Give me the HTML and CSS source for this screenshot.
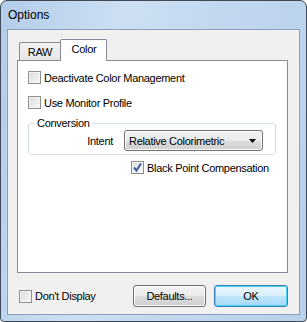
FILE: index.html
```html
<!DOCTYPE html>
<html lang="en">
<head>
    <meta charset="UTF-8">
    <title>Options</title>
    <link rel="stylesheet" href="styles.css">
</head>
<body>
    <div class="window">
        <div class="titlebar">Options</div>

        <div class="client">
            <div class="tabs">
                <div class="tab">RAW</div>
                <div class="tab selected">Color</div>
            </div>

            <div class="panel">
                <label class="check">
                    <span class="box"></span>
                    Deactivate Color Management
                </label>
                <label class="check">
                    <span class="box"></span>
                    Use Monitor Profile
                </label>

                <fieldset class="group">
                    <legend>Conversion</legend>
                    <div class="field-row">
                        <span class="field-label">Intent</span>
                        <div class="combo">
                            <span>Relative Colorimetric</span>
                            <svg width="7" height="4" viewBox="0 0 7 4"><polygon points="0,0 7,0 3.5,4" fill="#000"/></svg>
                        </div>
                    </div>
                </fieldset>

                <label class="check bpc">
                    <span class="box checked">
                        <svg width="11" height="11" viewBox="0 0 11 11"><path d="M2 5.5 L4.5 8.5 L9 1.5" fill="none" stroke="#3d5fa8" stroke-width="2"/></svg>
                    </span>
                    Black Point Compensation
                </label>
            </div>

            <div class="footer">
                <label class="check">
                    <span class="box"></span>
                    Don't Display
                </label>
                <div class="buttons">
                    <button class="btn">Defaults...</button>
                    <button class="btn default">OK</button>
                </div>
            </div>
        </div>
    </div>
</body>
</html>
```

FILE: styles.css
```css
body {
    margin: 0;
    padding: 0;
    font-family: "Liberation Sans", Arial, sans-serif;
    font-size: 11px;
    letter-spacing: -0.3px;
    color: #000;
    background: #fff;
}
.window {
    width: 307px;
    height: 322px;
    box-sizing: border-box;
    border: 1px solid #3c4a5a;
    border-radius: 7px 7px 4px 4px;
    background: linear-gradient(100deg, #b3cce8 0%, #cde0f3 35%, #c3d8ef 60%, #b8d0eb 100%);
    display: flex;
    flex-direction: column;
}
.titlebar {
    height: 28px;
    line-height: 29px;
    padding-left: 7px;
    font-size: 12px;
    letter-spacing: 0;
    color: #000;
}
.client {
    margin: 0 6px 6px 6px;
    flex: 1;
    border: 1px solid #8ba0b8;
    background: #f0f0f0;
    padding: 9px 11px 7px 9px;
    display: flex;
    flex-direction: column;
}
.tabs {
    display: flex;
    align-items: flex-end;
    height: 21px;
    padding-left: 2px;
}
.tab {
    box-sizing: border-box;
    width: 41px;
    height: 18px;
    border: 1px solid #898c95;
    border-bottom: none;
    border-right: none;
    border-radius: 2px 0 0 0;
    background: linear-gradient(#f3f3f3, #e5e5e5);
    text-align: center;
    line-height: 19px;
}
.tab.selected {
    width: 47px;
    height: 22px;
    margin-bottom: -1px;
    border-right: 1px solid #898c95;
    border-radius: 2px 2px 0 0;
    background: #fff;
    position: relative;
    z-index: 1;
    line-height: 18px;
    padding-left: 1px;
}
.panel {
    height: 213px;
    box-sizing: border-box;
    border: 1px solid #898c95;
    background: #fff;
    padding: 10px 11px 0 10px;
}
.check {
    display: flex;
    align-items: center;
    gap: 3px;
    height: 13px;
    margin-bottom: 12px;
    white-space: nowrap;
}
.box {
    box-sizing: border-box;
    width: 13px;
    height: 13px;
    flex: none;
    border: 1px solid #8e8f8f;
    background: linear-gradient(135deg, #d9d9d9, #fbfbfb);
    box-shadow: inset 0 0 0 1px #f4f4f4;
    display: flex;
    align-items: center;
    justify-content: center;
}
.box.checked {
    background: linear-gradient(135deg, #dcdcdc, #fbfbfb);
}
.group {
    margin: -4px 0 0 0;
    padding: 0 0 3px 0;
    border: 1px solid #d5dfe5;
    border-radius: 3px;
}
.group legend {
    margin-left: 6px;
    padding: 0 2px;
    line-height: 13px;
}
.field-row {
    display: flex;
    align-items: center;
    gap: 11px;
}
.field-label {
    width: 84px;
    text-align: right;
}
.combo {
    box-sizing: border-box;
    width: 139px;
    height: 21px;
    border: 1px solid #707070;
    border-radius: 3px;
    background: linear-gradient(#f2f2f2 0%, #ebebeb 50%, #dddddd 51%, #cfcfcf 100%);
    box-shadow: inset 0 0 0 1px #fcfcfc;
    display: flex;
    align-items: center;
    justify-content: space-between;
    padding: 0 6px 0 4px;
}
.bpc {
    margin-top: 6px;
    margin-left: 103px;
}
.footer {
    display: flex;
    align-items: center;
    justify-content: space-between;
    margin-top: 12px;
    padding-left: 2px;
}
.footer .check {
    margin: 0;
}
.buttons {
    display: flex;
    gap: 8px;
}
.btn {
    width: 73px;
    height: 22px;
    font: inherit;
    letter-spacing: inherit;
    color: #000;
    border: 1px solid #707070;
    border-radius: 3px;
    background: linear-gradient(#f2f2f2 0%, #ebebeb 50%, #dddddd 51%, #cfcfcf 100%);
    box-shadow: inset 0 0 0 1px #fcfcfc;
    padding: 0;
}
.btn.default {
    width: 74px;
    border-color: #3c7fb1;
    background: linear-gradient(#eaf6fd 0%, #d9f0fc 50%, #bee6fd 51%, #a7d9f5 100%);
    box-shadow: inset 0 0 0 1px #48d7fb;
}
```
